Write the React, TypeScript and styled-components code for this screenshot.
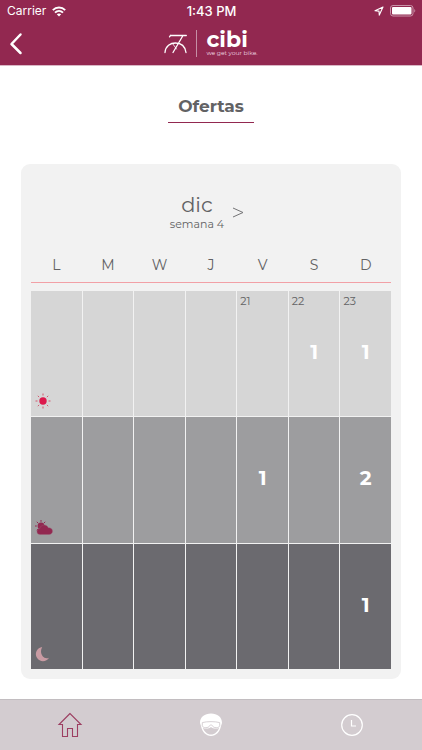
import React from "react";
import styled, { createGlobalStyle, css } from "styled-components";

const GlobalStyle = createGlobalStyle`
  * { box-sizing: border-box; }
  body { margin: 0; background: #fff; color: #626264; font-family: Montserrat, Inter, sans-serif; }
  button { border: 0; padding: 0; background: none; color: inherit; font: inherit; cursor: pointer; }
  svg { display: block; }
`;

const Page = styled.div`
  min-height: 100vh;
  display: flex;
  flex-direction: column;
`;

const Header = styled.header`
  height: 66px;
  background: #922850;
  color: #fff;
  border-bottom: 1px solid #d9b7c5;
`;

const StatusBar = styled.div`
  height: 22px;
  padding: 0 6px 0 7px;
  display: grid;
  grid-template-columns: 1fr auto 1fr;
  align-items: center;
  font: 400 12px/22px Inter, sans-serif;
`;

const StatusGroup = styled.div<{ $end?: boolean }>`
  display: flex;
  align-items: center;
  gap: 6px;
  justify-content: ${(p) => (p.$end ? "flex-end" : "flex-start")};
`;

const Time = styled.time`
  font-weight: 500;
  font-size: 13px;
`;

const NavBar = styled.div`
  height: 43px;
  padding: 0 8px;
  display: grid;
  grid-template-columns: 1fr auto 1fr;
  align-items: center;
`;

const BackButton = styled.button`
  width: 18px;
  height: 28px;
`;

const Brand = styled.a`
  display: flex;
  align-items: center;
  gap: 8px;
  color: #fff;
  text-decoration: none;
`;

const BrandText = styled.span`
  padding-left: 9px;
  height: 27px;
  border-left: 1px solid #c58fa5;
  display: flex;
  flex-direction: column;
`;

const BrandName = styled.span`
  font-size: 22px;
  line-height: 20px;
  font-weight: 700;
`;

const Tagline = styled.span`
  font-size: 6px;
  line-height: 6px;
  color: #f0dce4;
`;

const Main = styled.main`
  flex: 1;
  padding: 28px 21px 20px;
  display: flex;
  flex-direction: column;
  align-items: center;
`;

const Title = styled.h1`
  margin: 0 0 41px;
  padding: 0 10px;
  height: 29px;
  border-bottom: 1px solid #922850;
  font-size: 17px;
  line-height: 25px;
  font-weight: 700;
`;

const Card = styled.section`
  flex: 1;
  align-self: stretch;
  padding: 28px 10px 10px;
  border-radius: 9px;
  background: #f2f2f2;
  display: flex;
  flex-direction: column;
`;

const WeekPicker = styled.div`
  display: flex;
  justify-content: center;
  align-items: center;
  gap: 8px;
  padding-right: 8px;
  height: 40px;
`;

const WeekLabel = styled.div`
  text-align: center;
`;

const Month = styled.div`
  font-size: 21px;
  line-height: 24px;
`;

const Week = styled.div`
  font-size: 11px;
  line-height: 14px;
`;

const NextButton = styled.button`
  width: 12px;
  height: 24px;
  display: grid;
  place-items: center;
`;

const Calendar = styled.table`
  flex: 1;
  margin-top: 22px;
  display: flex;
  flex-direction: column;
  gap: 8px;
`;

const DaysHead = styled.thead`
  display: block;
  border-bottom: 1px solid #f2a0a6;
`;

const Shifts = styled.tbody`
  flex: 1;
  display: flex;
  flex-direction: column;
  gap: 1px;
`;

const columns = css`
  display: grid;
  grid-template-columns: repeat(7, 1fr);
  column-gap: 1px;
`;

const DaysRow = styled.tr`
  ${columns}
`;

const DayName = styled.th`
  padding: 0;
  font-size: 14px;
  line-height: 22px;
  height: 28px;
  font-weight: 400;
`;

const ShiftRow = styled.tr<{ $tone: string }>`
  ${columns}
  flex: 1;
  min-height: 120px;
  td { background: ${(p) => p.$tone}; }
`;

const Slot = styled.td`
  padding: 3px 3px 6px;
  display: grid;
  grid-template-rows: 1fr auto 1fr;
`;

const DateLabel = styled.span`
  grid-row: 1;
  font-size: 11px;
  line-height: 14px;
`;

const Count = styled.button`
  grid-row: 2;
  color: #fff;
  font-size: 20px;
  line-height: 24px;
  font-weight: 700;
`;

const ShiftIcon = styled.span`
  grid-row: 3;
  align-self: end;
`;

const TabBar = styled.nav`
  height: 51px;
  background: #d3ccd0;
  border-top: 1px solid #c2bdc0;
  display: grid;
  grid-template-columns: repeat(3, 1fr);
`;

const Tab = styled.button<{ $active?: boolean }>`
  display: grid;
  place-items: center;
  color: ${(p) => (p.$active ? "#9c3e61" : "#fff")};
`;

const Sun = () => (
  <svg width="18" height="18" viewBox="0 0 18 18" aria-hidden="true">
    <circle cx="9" cy="9" r="3.7" fill="#dc194c" />
    <path d="M9 1.5v2M9 14.5v2M1.5 9h2M14.5 9h2M3.8 3.8l1.3 1.3M12.9 12.9l1.3 1.3M3.8 14.2l1.3-1.3M12.9 5.1l1.3-1.3" stroke="#d2586f" strokeWidth="1" />
  </svg>
);

const CloudSun = () => (
  <svg width="20" height="18" viewBox="0 0 20 18" aria-hidden="true">
    <circle cx="7" cy="7" r="3.4" fill="#922850" />
    <path d="M7 1v1.8M1 7h1.8M2.8 2.8l1.3 1.3M11.2 2.8L9.9 4.1M2.8 11.2l1.3-1.3" stroke="#922850" />
    <path d="M6.2 15.5C4 15.5 3 14 3 12.4c0-1.7 1.3-2.9 2.8-2.9C6.3 7.4 8 6 10.1 6c1.9 0 3.5 1 4.1 2.7 2.5-.2 4.3 1.3 4.3 3.4s-1.6 3.4-3.5 3.4z" fill="#922850" stroke="#9f5a74" strokeWidth=".4" />
  </svg>
);

const Moon = () => (
  <svg width="18" height="18" viewBox="0 0 18 18" aria-hidden="true">
    <path d="M8.2 2A7.1 7.1 0 1 0 15 12.8C9.5 15.3 4.7 8 8.2 2z" fill="#c99ba3" />
  </svg>
);

const House = () => (
  <svg width="26" height="26" viewBox="0 0 26 26" fill="none" stroke="currentColor" strokeWidth="1.1" aria-hidden="true">
    <path d="M13 1.5L2 12.5h3.5v12h5v-8h5v8h5v-12H24z" />
  </svg>
);

const Rider = () => (
  <svg width="24" height="26" viewBox="0 0 24 26" aria-hidden="true">
    <path d="M1 11C1 5 5.7 1.5 12 1.5S23 5 23 11l-1 3c-1 5.8-5 10-10 10S3 19.800 2 14z" fill="#fff" />
    <path d="M3.3 10.6c4.6-1.3 12.800-1.3 17.400 0v3.3c-.5 2.200-6.400 2.600-7.400-.3-.4-1-2.200-1-2.600 0-1 2.900-6.900 2.500-7.400.3z" fill="#fff" stroke="#d3ccd0" strokeWidth=".9" />
    <path d="M4 15.700c1 3.800 4.300 6.800 8 6.800s7-3 8-6.800c-1.700 1.200-5.800 1.300-8-.7-2.200 2-6.300 1.900-8 .7z" fill="#d3ccd0" />
  </svg>
);

const Clock = () => (
  <svg width="24" height="24" viewBox="0 0 24 24" fill="none" stroke="currentColor" strokeWidth="1.200" aria-hidden="true">
    <circle cx="12" cy="12" r="10.300" />
    <path d="M11.500 7v6H16" />
  </svg>
);

const BikeLogo = () => (
  <svg width="24" height="20" viewBox="0 0 24 20" fill="none" stroke="#fff" strokeWidth="1.300" strokeLinecap="round" aria-hidden="true">
    <path d="M6.500 1.500h15.800M6.500 1.500l-1 1.300M19 1.500L9 18.500M1 18.500C1.500 12 6.500 9 11.500 9S21 12 22 18.500" />
    <path d="M8.500 9.500l4 5.500" strokeWidth=".8" />
  </svg>
);

const dayNames = ["L", "M", "W", "J", "V", "S", "D"];
const dates: Record<number, number> = { 4: 21, 5: 22, 6: 23 };

type Shift = { name: string; tone: string; icon: React.ReactNode; offers: Record<number, number>; dated?: boolean };

const shifts: Shift[] = [
  { name: "Mañana", tone: "#d6d6d6", icon: <Sun />, offers: { 5: 1, 6: 1 }, dated: true },
  { name: "Tarde", tone: "#9d9d9f", icon: <CloudSun />, offers: { 4: 1, 6: 2 } },
  { name: "Noche", tone: "#6b6a6f", icon: <Moon />, offers: { 6: 1 } },
];

export default function App() {
  return (
    <Page>
      <GlobalStyle />
      <Header>
        <StatusBar>
          <StatusGroup>
            <span>Carrier</span>
            <svg width="14" height="11" viewBox="0 0 14 11" fill="none" stroke="#fff" strokeWidth="1.900" aria-hidden="true">
              <path d="M.8 4.100c3.500-3.400 8.900-3.400 12.400 0M3 6.600c2.300-2.200 5.700-2.200 8 0" />
              <path d="M4.800 8.300c1.300-1.200 3.100-1.200 4.400 0L7 10.500z" fill="#fff" stroke="none" />
            </svg>
          </StatusGroup>
          <Time>1:43 PM</Time>
          <StatusGroup $end>
            <svg width="10" height="10" viewBox="0 0 10 10" fill="none" stroke="#fff" strokeWidth="1.100" strokeLinejoin="round" aria-hidden="true">
              <path d="M9 1L1 4.800l4 .3.300 4z" />
            </svg>
            <svg width="26" height="12" viewBox="0 0 26 12" aria-hidden="true">
              <rect x=".5" y=".5" width="22.500" height="10.500" rx="2.500" fill="none" stroke="#c994a9" />
              <rect x="2" y="2" width="19.500" height="7.500" rx="1" fill="#fff" />
              <path d="M24.300 4v3.500c1.300-.4 1.300-3.100 0-3.500z" fill="#c994a9" />
            </svg>
          </StatusGroup>
        </StatusBar>
        <NavBar>
          <BackButton aria-label="Volver">
            <svg width="16" height="26" viewBox="0 0 16 26" fill="none" stroke="#fff" strokeWidth="2.500" strokeLinecap="round" strokeLinejoin="round" aria-hidden="true">
              <path d="M12.500 3.500L3.500 13l9 9" />
            </svg>
          </BackButton>
          <Brand href="#">
            <BikeLogo />
            <BrandText>
              <BrandName>cibi</BrandName>
              <Tagline>we get your bike.</Tagline>
            </BrandText>
          </Brand>
        </NavBar>
      </Header>
      <Main>
        <Title>Ofertas</Title>
        <Card>
          <WeekPicker>
            <WeekLabel>
              <Month>dic</Month>
              <Week>semana 4</Week>
            </WeekLabel>
            <NextButton aria-label="Semana siguiente">
              <svg width="12" height="12" viewBox="0 0 12 12" fill="none" stroke="#747476" aria-hidden="true">
                <path d="M1 2l10 4.500L1 11" />
              </svg>
            </NextButton>
          </WeekPicker>
          <Calendar aria-label="Ofertas de la semana">
            <DaysHead>
              <DaysRow>
                {dayNames.map((d) => <DayName key={d} scope="col">{d}</DayName>)}
              </DaysRow>
            </DaysHead>
            <Shifts>
              {shifts.map((shift) => (
                <ShiftRow key={shift.name} $tone={shift.tone} aria-label={shift.name}>
                  {dayNames.map((d, i) => (
                    <Slot key={d}>
                      {shift.dated && dates[i] && <DateLabel>{dates[i]}</DateLabel>}
                      {shift.offers[i] && <Count>{shift.offers[i]}</Count>}
                      {i === 0 && <ShiftIcon>{shift.icon}</ShiftIcon>}
                    </Slot>
                  ))}
                </ShiftRow>
              ))}
            </Shifts>
          </Calendar>
        </Card>
      </Main>
      <TabBar>
        <Tab $active aria-label="Inicio"><House /></Tab>
        <Tab aria-label="Perfil"><Rider /></Tab>
        <Tab aria-label="Historial"><Clock /></Tab>
      </TabBar>
    </Page>
  );
}
